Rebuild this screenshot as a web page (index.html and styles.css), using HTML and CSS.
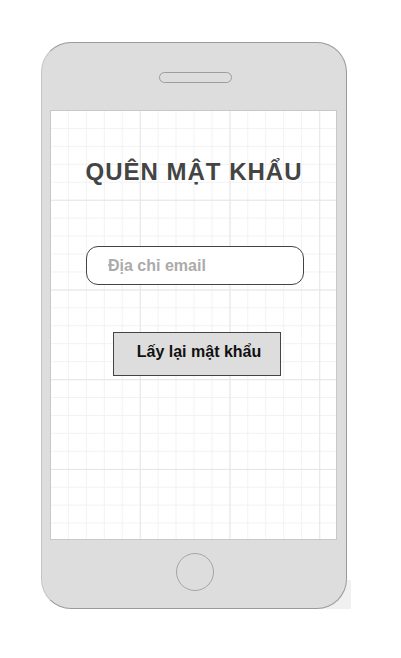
FILE: index.html
```html
<!DOCTYPE html>
<html lang="vi">
<head>
  <meta charset="UTF-8" />
  <meta name="viewport" content="width=device-width, initial-scale=1.0"/>
  <title>Quên mật khẩu</title>
  <link rel="stylesheet" href="styles.css">
</head>
<body>

  <div class="phone">
    <div class="speaker"></div>

    <div class="screen">
      <h2 class="title">QUÊN MẬT KHẨU</h2>
      <input type="email" class="email" placeholder="Địa chỉ email" />
      <button type="button" class="reset-btn">Lấy lại mật khẩu</button>
    </div>

    <div class="home-btn"></div>
  </div>

</body>
</html>
```

FILE: styles.css
```css
body {
  margin: 0;
  background: #fff;
  font-family: "Liberation Sans", Arial, sans-serif;
}

.phone {
  position: relative;
  box-sizing: border-box;
  width: 306px;
  height: 567px;
  margin: 42px 0 0 41px;
  background: #dddddd;
  border: 1px solid #9a9a9a;
  border-left-color: #c4c4c4;
  border-radius: 30px;
  display: flex;
  flex-direction: column;
  align-items: center;
}

/* light drop shadow at the bottom right corner */
.phone::after {
  content: "";
  position: absolute;
  right: -5px;
  bottom: -2px;
  width: 30px;
  height: 30px;
  background: #f0f0f0;
  z-index: -1;
}

.speaker {
  box-sizing: border-box;
  width: 73px;
  height: 11px;
  margin-top: 29px;
  margin-left: 2px;
  border: 1px solid #9d9d9d;
  border-radius: 6px;
}

.screen {
  box-sizing: border-box;
  width: 287px;
  height: 430px;
  margin-top: 27px;
  margin-right: 1px;
  border: 1px solid #c8c8c8;
  background-color: #fff;
  background-image:
    linear-gradient(to right, transparent 89px, #e6e6e6 89px, #e6e6e6 90px, transparent 90px),
    linear-gradient(to bottom, transparent 89px, #e6e6e6 89px, #e6e6e6 90px, transparent 90px),
    linear-gradient(to right, transparent 17px, #f2f2f2 17px),
    linear-gradient(to bottom, transparent 17px, #f2f2f2 17px);
  background-size: 89.75px 89.75px, 89.75px 89.75px, 17.95px 17.95px, 17.95px 17.95px;
  display: flex;
  flex-direction: column;
  align-items: flex-start;
}

.title {
  align-self: stretch;
  margin: 47px 0 0 1px;
  font-size: 24px;
  line-height: 28px;
  font-weight: bold;
  letter-spacing: 1px;
  color: #444;
  text-align: center;
}

.email {
  box-sizing: border-box;
  width: 218px;
  height: 39px;
  margin: 60px 0 0 35px;
  padding: 0 21px;
  border: 1px solid #444;
  border-radius: 12px;
  background: #fff;
  font-family: "Liberation Sans", Arial, sans-serif;
  font-size: 16px;
  font-weight: bold;
  color: #333;
  outline: none;
}

.email::placeholder {
  color: #ababab;
}

.reset-btn {
  box-sizing: border-box;
  width: 168px;
  height: 44px;
  margin: 47px 0 0 62px;
  padding: 0 0 5px 4px;
  border: 1px solid #444;
  background: #dddddd;
  font-family: "Liberation Sans", Arial, sans-serif;
  font-size: 16px;
  font-weight: bold;
  color: #111;
}

.home-btn {
  box-sizing: border-box;
  width: 38px;
  height: 38px;
  margin-top: 13px;
  margin-left: 1px;
  border: 1px solid #a5a5a5;
  border-radius: 50%;
}
```
